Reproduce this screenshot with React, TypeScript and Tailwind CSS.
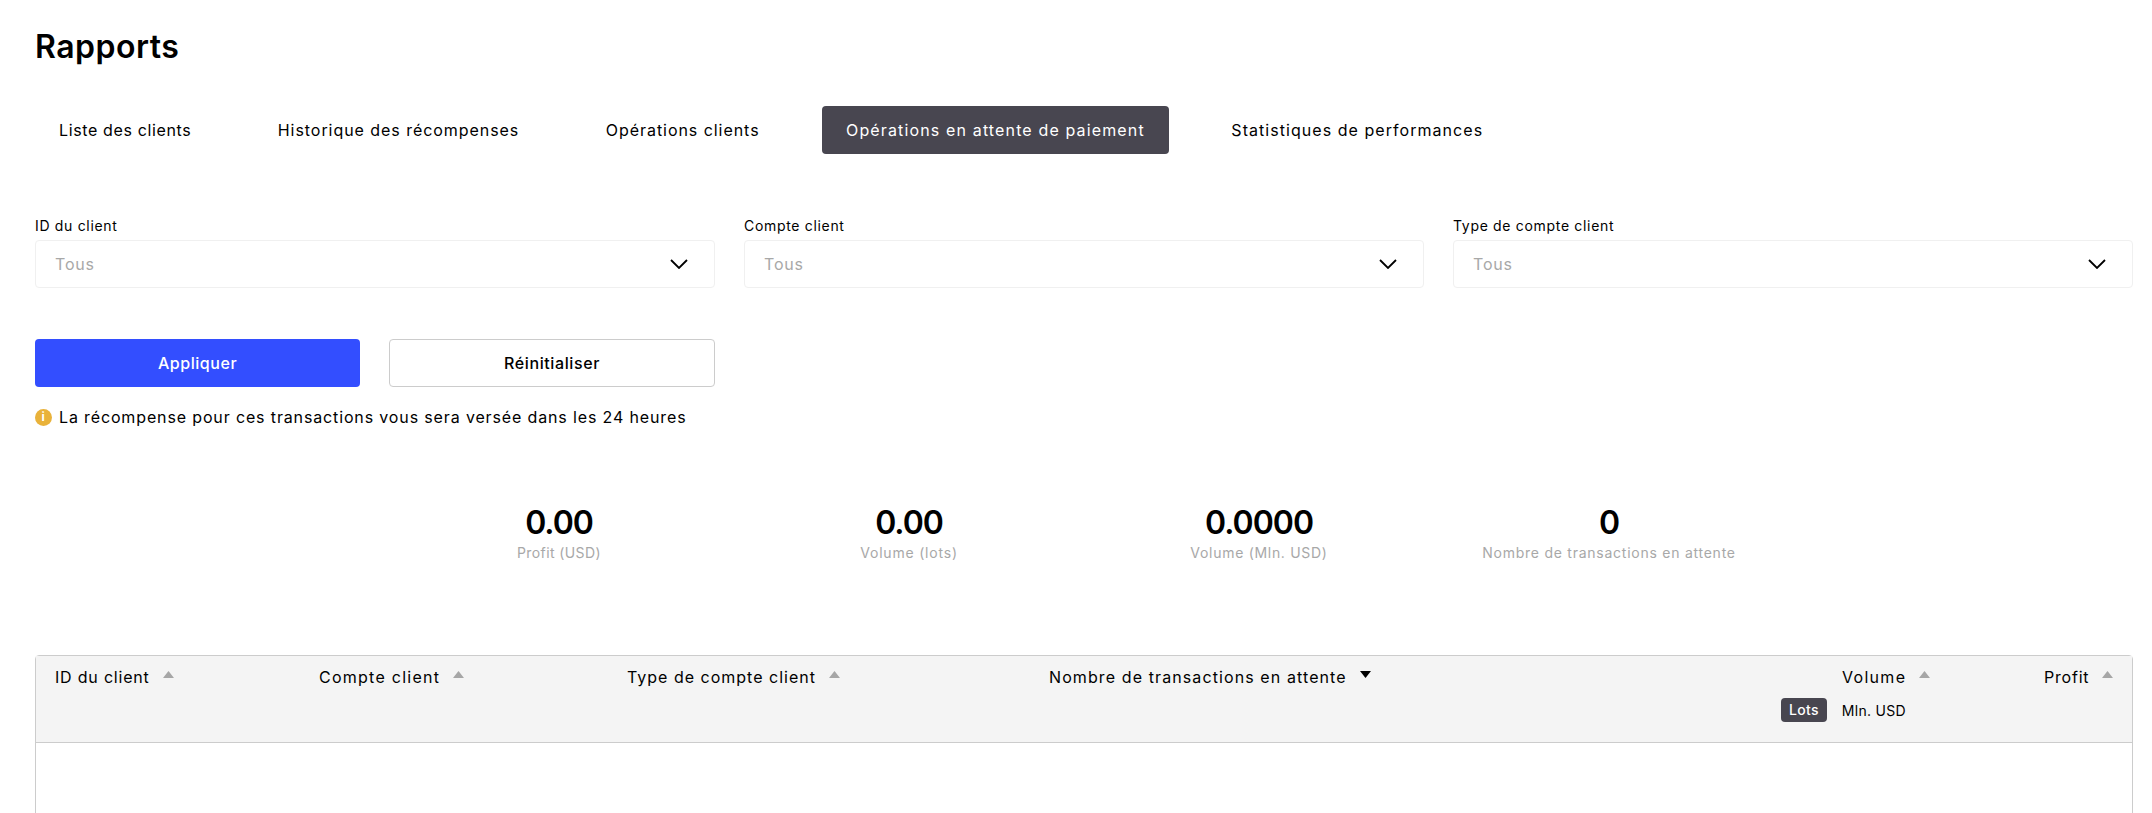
const font = "font-['Inter','Liberation_Sans',sans-serif]";

const tabs = [
  { label: "Liste des clients", tracking: "tracking-[0.63px]" },
  { label: "Historique des récompenses", tracking: "tracking-[0.95px]" },
  { label: "Opérations clients", tracking: "tracking-[0.95px]" },
  { label: "Opérations en attente de paiement", tracking: "tracking-[1.14px]" },
  { label: "Statistiques de performances", tracking: "tracking-[1.05px]" },
];

const filters = ["ID du client", "Compte client", "Type de compte client"];

const stats = [
  { value: "0.00", label: "Profit (USD)", tracking: "tracking-[0.4px]" },
  { value: "0.00", label: "Volume (lots)", tracking: "tracking-[0.8px]" },
  { value: "0.0000", label: "Volume (Mln. USD)", tracking: "tracking-[0.7px]" },
  { value: "0", label: "Nombre de transactions en attente", tracking: "tracking-[0.75px]" },
];

function Chevron() {
  return (
    <svg width="18" height="10" viewBox="0 0 18 10" fill="none" className="text-black">
      <path d="M1 1l8 8 8-8" stroke="currentColor" strokeWidth="1.8" />
    </svg>
  );
}

function SortArrow({ down = false }: { down?: boolean }) {
  return (
    <svg width="11" height="7" viewBox="0 0 11 7" className={down ? "text-black" : "text-[#a6a6a6]"}>
      <path d={down ? "M0 0h11L5.5 7z" : "M5.5 0L11 7H0z"} fill="currentColor" />
    </svg>
  );
}

function HeaderLabel({ text, tracking, down }: { text: string; tracking: string; down?: boolean }) {
  return (
    <div className={`flex h-[42px] items-center gap-[13px] text-[16px] font-[420] text-black ${tracking}`}>
      <span>{text}</span>
      <span className="-mt-[5px]">
        <SortArrow down={down} />
      </span>
    </div>
  );
}

export default function App() {
  return (
    <div className={`${font} h-screen overflow-hidden bg-white pl-[35px] pr-[19px]`}>
      <h1 className="pt-[27px] text-[32px] leading-[40px] font-semibold tracking-[0.5px] text-black">Rapports</h1>

      <div className="mt-[39px] flex gap-[38.5px]">
        {tabs.map((tab, i) => (
          <button
            key={tab.label}
            className={`h-[48px] rounded-[4px] px-[24px] text-[16px] font-[420] ${tab.tracking} ${
              i === 3 ? "bg-[#484650] text-white" : "text-black"
            }`}
          >
            {tab.label}
          </button>
        ))}
      </div>

      <div className="mt-[62px] grid grid-cols-3 gap-x-[29px]">
        {filters.map((label) => (
          <div key={label}>
            <div className="text-[14px] leading-[20px] font-[420] tracking-[0.68px] text-black">{label}</div>
            <div className="mt-[4px] flex h-[48px] items-center justify-between rounded-[4px] border border-[#f0f0f0] pr-[26px] pl-[19px]">
              <span className="text-[16px] tracking-[0.8px] text-[#a8a8a8]">Tous</span>
              <Chevron />
            </div>
          </div>
        ))}
      </div>

      <div className="mt-[51px] flex gap-[29px]">
        <button className="h-[48px] w-[325px] rounded-[4px] bg-[#334eff] text-[16px] font-medium tracking-[0.55px] text-white">
          Appliquer
        </button>
        <button className="h-[48px] w-[326px] rounded-[4px] border border-[#cccccc] bg-white text-[16px] font-medium tracking-[0.6px] text-black">
          Réinitialiser
        </button>
      </div>

      <div className="mt-[20px] flex h-[20px] items-center gap-[7px] text-[16px] font-[420] tracking-[0.86px] text-black">
        <span className="flex h-[17px] w-[17px] items-center justify-center rounded-full bg-[#e9b23a] text-[12px] leading-none font-bold text-white">
          i
        </span>
        La récompense pour ces transactions vous sera versée dans les 24 heures
      </div>

      <div className="mx-auto mt-[76px] grid w-[1400px] grid-cols-4 text-center">
        {stats.map((s) => (
          <div key={s.label}>
            <div className="text-[32px] leading-[40px] font-semibold tracking-[-1px] text-black">{s.value}</div>
            <div className={`text-[14px] leading-[20px] text-[#a8a8a8] ${s.tracking}`}>{s.label}</div>
          </div>
        ))}
      </div>

      <div className="mt-[92px] h-[300px] rounded-[4px] border border-[#cccccc]">
        <div className="grid h-[87px] grid-cols-[264px_308px_422px_732px_263px_1fr] border-b border-[#cccccc] bg-[#f4f4f4] pl-[19px]">
          <HeaderLabel text="ID du client" tracking="tracking-[0.8px]" />
          <HeaderLabel text="Compte client" tracking="tracking-[1.25px]" />
          <HeaderLabel text="Type de compte client" tracking="tracking-[1px]" />
          <HeaderLabel text="Nombre de transactions en attente" tracking="tracking-[1.1px]" down />
          <div>
            <div className="pl-[61px]">
              <HeaderLabel text="Volume" tracking="tracking-[1.3px]" />
            </div>
            <div className="flex items-center gap-[15px] text-[14px] tracking-[0.3px] text-black">
              <span className="rounded-[4px] bg-[#484650] px-[8px] py-[2px] leading-[20px] font-medium text-white">Lots</span>
              <span>Mln. USD</span>
            </div>
          </div>
          <HeaderLabel text="Profit" tracking="tracking-[0.8px]" />
        </div>
      </div>
    </div>
  );
}
